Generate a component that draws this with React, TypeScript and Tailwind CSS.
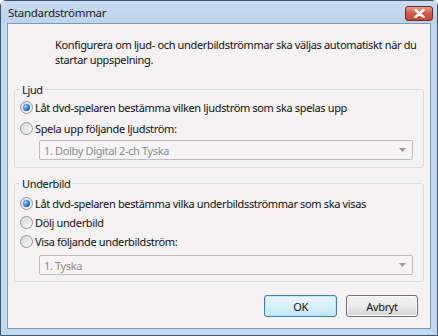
import React, { useState } from 'react';

const font = { fontFamily: '"Noto Sans", "Open Sans", sans-serif' };

type RadioProps = { checked: boolean; label: string; onClick: () => void; h?: string };

const Radio = ({ checked, label, onClick, h = 'h-[20px]' }: RadioProps) => (
  <div className={`flex items-center ${h} pl-[5px] cursor-default`} onClick={onClick}>
    <span className="w-[13px] h-[13px] rounded-full border border-[#979797] bg-gradient-to-br from-[#d6d6d6] to-[#fbfbfb] flex items-center justify-center shrink-0">
      {checked && (
        <span className="w-[7px] h-[7px] rounded-full bg-[radial-gradient(circle_at_35%_35%,#8fd0ff,#1d6fc4_60%,#0c3e82)]" />
      )}
    </span>
    <span className="ml-[2px] text-[#111] whitespace-nowrap">{label}</span>
  </div>
);

const Combo = ({ value, mt }: { value: string; mt: string }) => (
  <div className={`ml-[24px] mr-[10px] h-[20px] ${mt} border border-[#bdbdbd] rounded-[2px] bg-[#f6f4f5] flex items-center justify-between pl-[4px] pr-[6px]`}>
    <span className="text-[#8d8d8d]">{value}</span>
    <svg width="7" height="4" viewBox="0 0 7 4">
      <path d="M0 0h7L3.5 4z" fill="#9a9a9a" />
    </svg>
  </div>
);

export default function App() {
  const [audio, setAudio] = useState(0);
  const [sub, setSub] = useState(0);

  return (
    <div className="w-[438px] h-[336px] bg-[#c3d8ee] border border-[#3c5570] rounded-t-[6px] flex flex-col text-[11px] leading-[15px] tracking-[-0.35px]" style={font}>
      <div className="h-[22px] flex items-center justify-between pl-[7px] pr-[4px] bg-gradient-to-b from-[#cadcf0] to-[#bdd3ea]">
        <span className="text-[11.5px] tracking-[-0.3px] text-[#1b1b1b]">Standardströmmar</span>
        <div className="w-[28px] h-[15px] mt-[2px] rounded-[3px] border border-[#6d2b25] bg-gradient-to-b from-[#e29a8c] via-[#cf5b47] to-[#c2483a] flex items-center justify-center">
          <svg width="11" height="9" viewBox="0 0 11 9">
            <path d="M1.5 1L9.5 8M9.5 1L1.5 8" stroke="#fff" strokeWidth="2.4" strokeLinecap="round" />
          </svg>
        </div>
      </div>
      <div className="flex-1 mx-[6px] mb-[6px] border border-[#7f98b1] bg-[#f5f2f4] flex flex-col">
        <p className="pl-[47px] pt-[13px] text-[#111] whitespace-nowrap">
          Konfigurera om ljud- och underbildströmmar ska väljas automatiskt när du
          <br />
          startar uppspelning.
        </p>

        <fieldset className="mx-[6px] mt-[15px] border border-[#d9dee3] rounded-[3px] pb-[7px]">
          <legend className="ml-[5px] px-[2px] text-[#111]">Ljud</legend>
          <Radio h="h-[21px]" checked={audio === 0} onClick={() => setAudio(0)} label="Låt dvd-spelaren bestämma vilken ljudström som ska spelas upp" />
          <Radio h="h-[21px]" checked={audio === 1} onClick={() => setAudio(1)} label="Spela upp följande ljudström:" />
          <Combo mt="mt-[1px]" value="1. Dolby Digital 2-ch Tyska" />
        </fieldset>

        <fieldset className="mx-[6px] mt-[8px] border border-[#d9dee3] rounded-[3px] pb-[6px]">
          <legend className="ml-[5px] px-[2px] text-[#111]">Underbild</legend>
          <div className="mt-[3px]" />
          <Radio h="h-[19px]" checked={sub === 0} onClick={() => setSub(0)} label="Låt dvd-spelaren bestämma vilka underbildsströmmar som ska visas" />
          <Radio h="h-[19px]" checked={sub === 1} onClick={() => setSub(1)} label="Dölj underbild" />
          <Radio h="h-[19px]" checked={sub === 2} onClick={() => setSub(2)} label="Visa följande underbildström:" />
          <Combo mt="mt-[4px]" value="1. Tyska" />
        </fieldset>

        <div className="flex justify-end gap-[9px] mt-[13px] mr-[12px]">
          <button className="w-[73px] h-[22px] rounded-[3px] border border-[#3c7fb1] bg-gradient-to-b from-[#eaf6fd] via-[#d9f0fc] to-[#bee6fd] text-[#111] shadow-[inset_0_0_0_1px_#c4e5f6]">OK</button>
          <button className="w-[72px] h-[22px] rounded-[3px] border border-[#707070] bg-gradient-to-b from-[#f2f2f2] via-[#ebebeb] to-[#d6d6d6] text-[#111] shadow-[inset_0_0_0_1px_#fafafa]">Avbryt</button>
        </div>
      </div>
    </div>
  );
}
